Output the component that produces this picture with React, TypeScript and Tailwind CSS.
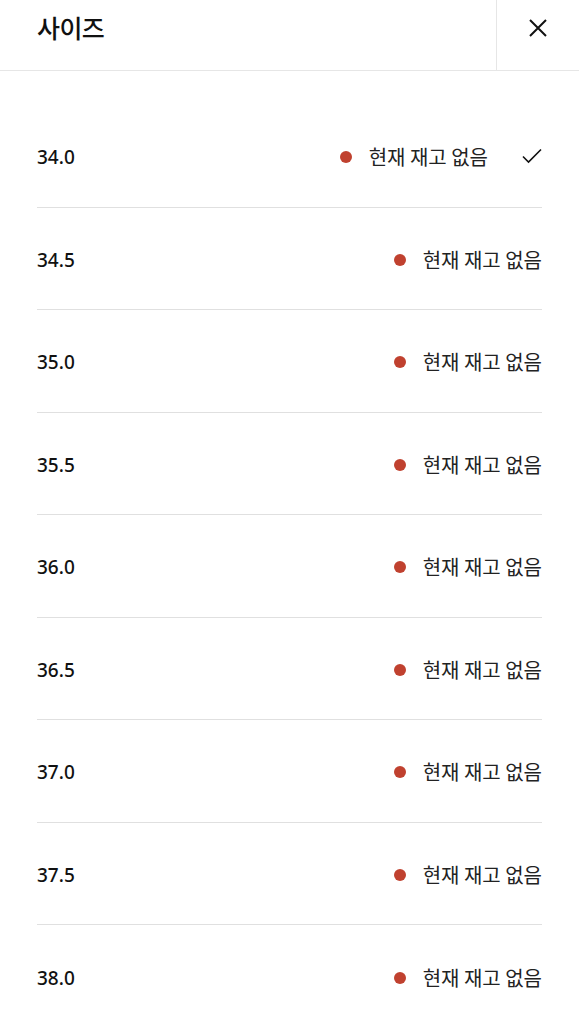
import React from 'react';

const SIZES = ['34.0', '34.5', '35.0', '35.5', '36.0', '36.5', '37.0', '37.5', '38.0'];

const App: React.FC = () => {
  return (
    <div
      className="min-h-screen bg-white text-[#111]"
      style={{ fontFamily: '"Noto Sans", "Noto Sans CJK KR", sans-serif' }}
    >
      {/* Header */}
      <header className="flex h-[71px] items-stretch border-b border-[#e6e6e6]">
        <h1
          className="flex flex-1 items-center pl-[37px] pb-[14px] text-[25px] font-medium tracking-tight"
          style={{ fontFamily: '"Noto Sans CJK KR", sans-serif' }}
        >
          사이즈
        </h1>
        <button className="flex w-[83px] items-center justify-center border-l border-[#e6e6e6] pb-[14px]">
          <svg width="20" height="20" viewBox="0 0 20 20" fill="none" stroke="#111" strokeWidth="2">
            <path d="M2 2L18 18M18 2L2 18" />
          </svg>
        </button>
      </header>

      {/* List */}
      <ul className="mx-[37px] pt-[34px]">
        {SIZES.map((s, i) => (
          <li
            key={s}
            className="flex h-[102.5px] items-center border-b border-[#e0e0e0] pt-[3px] last:border-b-0"
          >
            <span className="flex-1 text-[19px] font-medium">{s}</span>
            <span className="flex items-center">
              <span className="mr-[17px] h-[12px] w-[12px] rounded-full bg-[#c0412f]" />
              <span
                className="text-[20px] text-[#222]"
                style={{ fontFamily: '"Noto Sans CJK KR", sans-serif' }}
              >
                현재 재고 없음
              </span>
              {i === 0 && (
                <svg className="ml-[34px] mb-[3px]" width="20" height="16" viewBox="0 0 20 16" fill="none" stroke="#111" strokeWidth="1.6">
                  <path d="M1 8.5L6.5 14L19 1.5" />
                </svg>
              )}
            </span>
          </li>
        ))}
      </ul>
    </div>
  );
};

export default App;
